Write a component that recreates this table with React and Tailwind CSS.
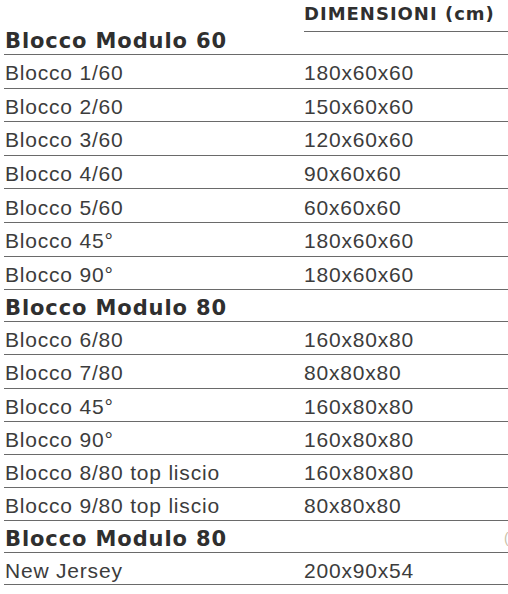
import React from "react";

const group60 = [
  ["Blocco 1/60", "180x60x60"],
  ["Blocco 2/60", "150x60x60"],
  ["Blocco 3/60", "120x60x60"],
  ["Blocco 4/60", "90x60x60"],
  ["Blocco 5/60", "60x60x60"],
  ["Blocco 45°", "180x60x60"],
  ["Blocco 90°", "180x60x60"],
];

const group80 = [
  ["Blocco 6/80", "160x80x80"],
  ["Blocco 7/80", "80x80x80"],
  ["Blocco 45°", "160x80x80"],
  ["Blocco 90°", "160x80x80"],
  ["Blocco 8/80 top liscio", "160x80x80"],
  ["Blocco 9/80 top liscio", "80x80x80"],
];

const Row = ({ name, size, height }) => (
  <div
    className={`flex items-center pt-[3px] border-b-[1.5px] border-[#6a6a6a] ${height}`}
  >
    <div className="w-[300px] pl-[1px]">{name}</div>
    <div>{size}</div>
  </div>
);

const GroupTitle = ({ children, height }) => (
  <div
    className={`flex items-end pb-[1px] border-b-[1.5px] border-[#6a6a6a] ${height} font-['DejaVu_Sans',sans-serif] font-bold text-[21px] tracking-[0.9px] text-[#2f2f2f] leading-none`}
  >
    <div className="pl-[1px] pb-[1px]">{children}</div>
  </div>
);

export default function App() {
  return (
    <div className="w-[508px] h-[594px] bg-white overflow-hidden relative font-['Liberation_Sans',Arial,sans-serif] text-[21px] tracking-[0.8px] text-[#3c3c3c] leading-none">
      <div className="pl-[4px]">
        <div className="h-[32px] flex">
          <div className="w-[300px]" />
          <div className="flex-1 flex items-end border-b-[1.5px] border-[#6a6a6a] pb-[8px] font-['DejaVu_Sans',sans-serif] font-bold text-[18px] tracking-[1px] text-[#2f2f2f]">
            DIMENSIONI (cm)
          </div>
        </div>
        <GroupTitle height="h-[23px]">Blocco Modulo 60</GroupTitle>
        {group60.map(([n, s], i) => (
          <Row key={i} name={n} size={s} height="h-[33.6px]" />
        ))}
        <GroupTitle height="h-[32px]">Blocco Modulo 80</GroupTitle>
        {group80.map(([n, s], i) => (
          <Row key={i} name={n} size={s} height="h-[33.2px]" />
        ))}
        <GroupTitle height="h-[32px]">Blocco Modulo 80</GroupTitle>
        <Row name="New Jersey" size="200x90x54" height="h-[32px]" />
      </div>
      <span className="absolute left-[504px] top-[531px] text-[14px] text-[#c9bfa8]">(</span>
    </div>
  );
}
